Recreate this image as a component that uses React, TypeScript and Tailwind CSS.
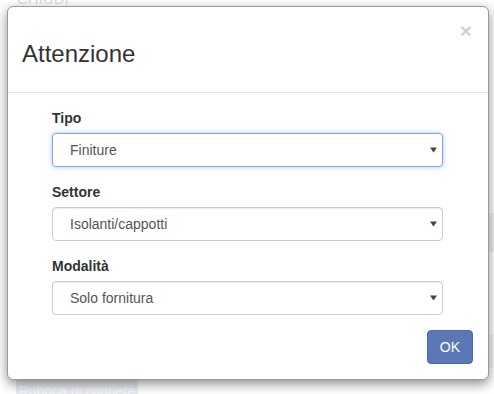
import React from "react";

type Field = { label: string; value: string; focused?: boolean };

const fields: Field[] = [
  { label: "Tipo", value: "Finiture", focused: true },
  { label: "Settore", value: "Isolanti/cappotti" },
  { label: "Modalità", value: "Solo fornitura" },
];

const Caret = () => (
  <svg width="7" height="6" viewBox="0 0 7 6" className="shrink-0">
    <polygon points="0,0.5 7,0.5 3.5,5.5" fill="#444" />
  </svg>
);

const SelectBox = ({ value, focused }: { value: string; focused?: boolean }) => (
  <div
    className={`flex h-[34px] items-center justify-between rounded-[4px] border bg-white pl-[17px] pr-[5px] text-[14px] text-[#555] ${
      focused
        ? "border-[#7ea6ea] shadow-[0_0_5px_rgba(102,150,233,0.55)]"
        : "border-[#ccc] shadow-[inset_0_1px_1px_rgba(0,0,0,0.075)]"
    }`}
  >
    <span>{value}</span>
    <Caret />
  </div>
);

export default function App() {
  return (
    <div className="relative h-[394px] w-[494px] overflow-hidden bg-white font-['Liberation_Sans',Arial,sans-serif]">
      {/* page behind the dialog */}
      <div className="flex h-full flex-col">
        <div className="-mt-[11px] pl-[17px] text-[15px] leading-[20px] text-[#dcdcdc]">
          CHIUDI
        </div>
        <div className="ml-auto mt-[204px] h-[39px] w-[40px] bg-[#efefef]" />
        <div className="ml-auto mt-[82px] h-[34px] w-[40px] bg-[#f4f4f4]" />
        <div className="ml-[16px] mt-auto flex h-[18px] w-[122px] items-start justify-center rounded-t-[3px] bg-[#e9ebf3] pt-[7px] text-[14px] leading-[16px] text-[#f7f8fb]">
          Rubrica di cantiere
        </div>
      </div>

      {/* dialog */}
      <div className="absolute left-[7px] top-[6px] w-[482px] rounded-[6px] border border-[#9a9a9a] bg-white shadow-[0_4px_12px_rgba(0,0,0,0.45)]">
        <div className="flex h-[86px] items-start justify-between border-b border-[#e5e5e5] pl-[14px] pr-[16px]">
          <h4 className="mt-[34px] text-[24px] leading-[26px] text-[#333]">Attenzione</h4>
          <button className="mt-[13px] text-[21px] font-bold leading-none text-black/20">×</button>
        </div>
        <div className="pb-[15px] pr-[15px] pt-[15px]">
          <div className="w-[435px] pl-[44px]">
            {fields.map((f) => (
              <div key={f.label} className="mb-[15px]">
                <label className="mb-[5px] block text-[14px] font-bold leading-[20px] text-[#333]">
                  {f.label}
                </label>
                <SelectBox value={f.value} focused={f.focused} />
              </div>
            ))}
          </div>
          <div className="flex justify-end">
            <button className="h-[34px] rounded-[4px] border border-[#4d6aa6] bg-[#5a78b5] px-[12px] text-[14px] text-white">
              OK
            </button>
          </div>
        </div>
      </div>
    </div>
  );
}
